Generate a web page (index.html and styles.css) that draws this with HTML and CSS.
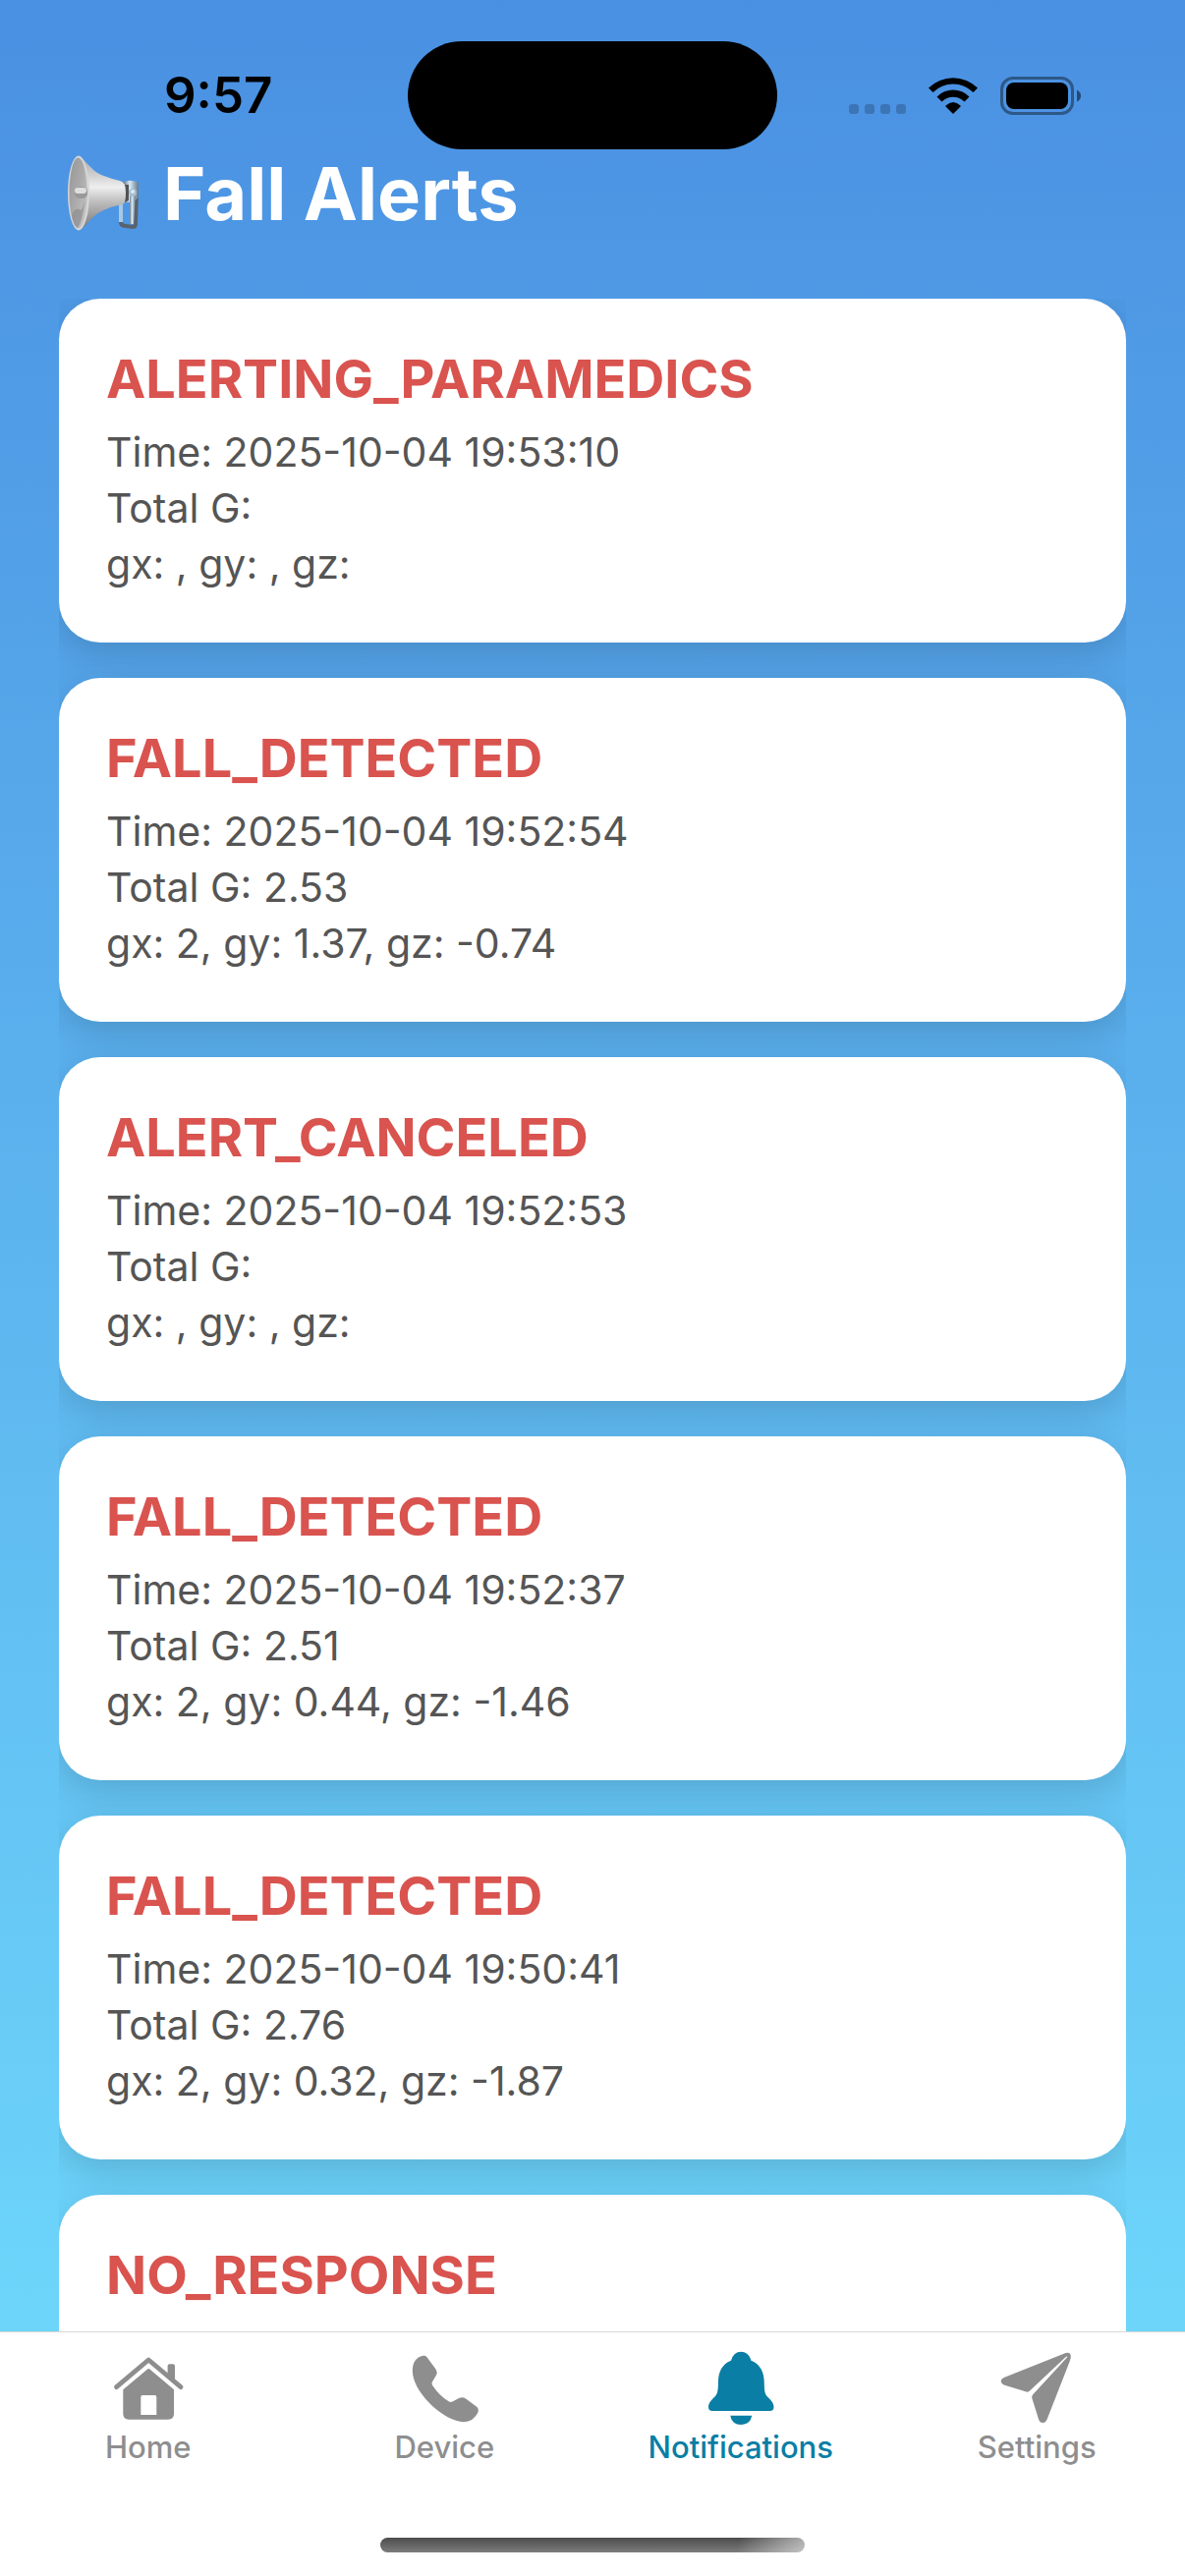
FILE: index.html
```html
<!DOCTYPE html>
<html lang="en">
<head>
<meta charset="utf-8">
<meta name="viewport" content="width=device-width, initial-scale=1">
<title>Fall Alerts</title>
<link rel="stylesheet" href="styles.css">
</head>
<body>
<div class="app">
  <div class="screen">
    <div class="status-bar">
      <div class="status-time">9:57</div>
      <div class="island"></div>
      <div class="status-icons">
        <svg class="cellular" viewBox="0 0 58 10" aria-hidden="true"><rect width="10" height="10" rx="3"/><rect x="16" width="10" height="10" rx="3"/><rect x="32" width="10" height="10" rx="3"/><rect x="48" width="10" height="10" rx="3"/></svg>
        <svg class="wifi" viewBox="0 0 52 38" aria-hidden="true"><path d="M1 11.500 5.500 16A29 29 0 0 1 46.500 16L51 11.500A35.500 35.500 0 0 0 1 11.500Z"/><path d="M9.500 20.500 14.500 25.500A16.300 16.300 0 0 1 37.500 25.500L42.500 20.500A23 23 0 0 0 9.500 20.500Z"/><path d="M18.500 29.500Q26 22.500 33.500 29.500Q33.800 30 33.500 30.500L26.500 37.500Q26 37.900 25.500 37.500L18.500 30.500Q18.200 30 18.500 29.500Z"/></svg>
        <svg class="battery" viewBox="0 0 82 39" aria-hidden="true"><rect x="1.500" y="1.500" width="72" height="36" rx="11.500" fill="none" stroke="#000" stroke-opacity=".4" stroke-width="3"/><rect x="6" y="6" width="63" height="27" rx="8"/><path d="M78 13.500Q82 15.500 82 19.500T78 25.500Z" fill-opacity=".5"/></svg>
      </div>
    </div>
    <h1 class="page-title">
      <svg class="megaphone" viewBox="0 0 76 78" aria-hidden="true">
        <defs>
          <linearGradient id="horn" x1="0" y1="0" x2="0" y2="1"><stop offset="0" stop-color="#a9a9a9"/><stop offset=".25" stop-color="#cfcfcf"/><stop offset=".42" stop-color="#eeeeee"/><stop offset=".62" stop-color="#bdbdbd"/><stop offset="1" stop-color="#777777"/></linearGradient>
          <linearGradient id="bell" x1="0" y1="0" x2="1" y2="1"><stop offset="0" stop-color="#969696"/><stop offset=".45" stop-color="#a9a8a8"/><stop offset="1" stop-color="#c9c9c9"/></linearGradient>
          <linearGradient id="steel"><stop offset="0" stop-color="#6d7e8d"/><stop offset=".4" stop-color="#d7eaf7"/><stop offset="1" stop-color="#66798a"/></linearGradient>
        </defs>
        <path d="M55 50V69Q56 72 60 72L67 73Q70 73 70 70L71 37" fill="none" stroke="#59636d" stroke-width="4"/>
        <path d="M55 50V68" stroke="#a9c8e2" stroke-width="4"/>
        <path d="M58 27Q66 24 73 28V43Q67 49 58 48Z" fill="url(#steel)"/>
        <path d="M59 30V48L63 46V30Z" fill="#505356"/>
        <path d="M12 1C21 6 24 15 35 20Q45 24 54 26Q60 27 60 38T57 50C47 52 36 55 28 62C21 68 18 75 11 76Z" fill="url(#horn)"/>
        <ellipse cx="12" cy="38.500" rx="11" ry="38" fill="#d5d5d5"/>
        <ellipse cx="11.500" cy="38.500" rx="9" ry="36" fill="url(#bell)"/>
        <path d="M5 61Q8 52 15 56L18 47Q16 67 11 74Q7 72 5 61Z" fill="#85858b" opacity=".6"/>
        <rect x="8" y="32" width="13" height="12" rx="5" fill="#999"/>
        <rect x="8" y="33" width="12" height="6" rx="3" fill="#dedede"/>
        <path d="M64 39V70H68L70 39Z" fill="url(#steel)"/>
        <circle cx="67" cy="38" r="4" fill="#a6bfd1"/><circle cx="67" cy="37" r="2" fill="#dceaf4"/>
      </svg>
      <span>Fall Alerts</span>
    </h1>
    <main class="alert-list">
      <article class="card"><h2>ALERTING_PARAMEDICS</h2><p>Time: 2025-10-04 19:53:10</p><p>Total G: </p><p>gx: , gy: , gz: </p></article>
      <article class="card"><h2>FALL_DETECTED</h2><p>Time: 2025-10-04 19:52:54</p><p>Total G: 2.53</p><p>gx: 2, gy: 1.37, gz: -0.74</p></article>
      <article class="card"><h2>ALERT_CANCELED</h2><p>Time: 2025-10-04 19:52:53</p><p>Total G: </p><p>gx: , gy: , gz: </p></article>
      <article class="card"><h2>FALL_DETECTED</h2><p>Time: 2025-10-04 19:52:37</p><p>Total G: 2.51</p><p>gx: 2, gy: 0.44, gz: -1.46</p></article>
      <article class="card"><h2>FALL_DETECTED</h2><p>Time: 2025-10-04 19:50:41</p><p>Total G: 2.76</p><p>gx: 2, gy: 0.32, gz: -1.87</p></article>
      <article class="card"><h2>NO_RESPONSE</h2></article>
    </main>
  </div>
  <nav class="tab-bar">
    <div class="tabs">
      <a class="tab" href="#home"><svg viewBox="0 0 84 84" aria-hidden="true"><path d="M9.500 40.700 42.200 13 75 40.700" fill="none" stroke="currentColor" stroke-width="4.800" stroke-linecap="round" stroke-linejoin="round"/><path d="M61.600 31V19.300Q61.600 17.300 63.600 17.300H67Q69 17.300 69 19.300V37Z"/><path fill-rule="evenodd" d="M40.500 23Q42.200 21.200 44 23L68 43.300V68Q68 73.700 62 73.700H22.300Q16.300 73.700 16.300 68V43.300ZM36 49Q34.300 49 34.300 51V69H50.300V51Q50.300 49 48.600 49Z"/></svg><span>Home</span></a>
      <a class="tab" href="#device"><svg viewBox="0 0 84 84" aria-hidden="true"><path d="M20.500 8.800Q23 8.300 24.300 10L33.500 22.500Q35.500 25.500 34 28.500L29.900 35.500Q29 37 30 38.700Q37 49.500 47 55.600Q48.700 56.500 50.500 55.600L57.500 51.800Q61 50.300 64 52.500L75.500 61Q77.600 63 76.700 66Q71 78 58 75.800C38 72 9.800 45 9.800 24Q10 11 20.500 8.800Z"/></svg><span>Device</span></a>
      <a class="tab active" href="#notifications"><svg viewBox="0 0 84 84" aria-hidden="true"><path d="M42.200 4.700Q50 4.700 52.400 13.700C62 17.500 65.500 25.500 65.700 35C65.900 43 65.800 47 69 50.500C72.500 54 75.500 57 75.500 61Q75.500 65 71.500 65H13Q9 65 9 61C9 57 12 54 15.500 50.500C18.700 47 18.800 43 19 35C19.200 25.500 22.500 17.500 32 13.700Q34.500 4.700 42.200 4.700ZM31.200 69.800H53.200Q51.500 79 42.200 79T31.200 69.800Z"/></svg><span>Notifications</span></a>
      <a class="tab" href="#settings"><svg viewBox="0 0 84 84" aria-hidden="true"><path d="M71.500 6Q77.500 4.500 76.700 11L75.500 15 53 72.500Q51.500 77 48.200 77Q45 77 43.800 72.700L37.300 52Q36.800 50 38 48.500L73 10.500Q73.300 9.300 72 9.700L35 44.500Q33.500 46 31.500 45.500L9.500 38.700Q5.700 37.500 5.700 34.300Q6 32 9.400 30.700Z"/></svg><span>Settings</span></a>
    </div>
    <div class="home-indicator"></div>
  </nav>
</div>
</body>
</html>
```
FILE: styles.css
```css
* { box-sizing: border-box; }

body {
  margin: 0;
  font-family: Inter, "Liberation Sans", sans-serif;
}

h1, h2, p { margin: 0; }

.app {
  display: flex;
  flex-direction: column;
  height: 100vh;
  background: #fff;
}

.screen {
  flex: 1;
  min-height: 0;
  display: flex;
  flex-direction: column;
  padding: 0 60px;
  background: linear-gradient(#4a90e2, #6dd5fa);
}

.status-bar {
  flex: none;
  display: grid;
  grid-template-columns: 1fr 376px 1fr;
  align-items: center;
  height: 152px;
  padding-top: 42px;
}

.status-time {
  padding-left: 107px;
  font-size: 51px;
  font-weight: 600;
  line-height: 62px;
}

.island {
  height: 110px;
  border-radius: 55px;
  background: #000;
}

.status-icons {
  display: flex;
  align-items: center;
  justify-content: flex-end;
  gap: 22px;
  padding-right: 46px;
}

.cellular { width: 58px; height: 10px; margin-top: 28px; fill-opacity: .2; }
.wifi { width: 52px; height: 38px; }
.battery { width: 82px; height: 39px; }

.page-title {
  flex: none;
  display: flex;
  align-items: center;
  gap: 22px;
  height: 90px;
  padding-left: 8px;
  color: #fff;
  font-size: 74px;
  font-weight: 700;
  line-height: 90px;
}

.megaphone { width: 76px; height: 78px; }

.alert-list {
  flex: 1;
  min-height: 0;
  margin-top: 62px;
  overflow: hidden;
}

.card {
  min-height: 350px;
  margin-bottom: 36px;
  padding: 48px;
  border-radius: 42px;
  background: #fff;
  box-shadow: 0 12px 36px rgba(0, 0, 0, .15);
}

.card h2 {
  margin-bottom: 16px;
  color: #d9534f;
  font-size: 54px;
  font-weight: 700;
  line-height: 67px;
}

.card p {
  margin-bottom: 6px;
  color: #555;
  font-size: 41px;
  line-height: 51px;
}

.tab-bar {
  flex: none;
  padding: 15px 0 24px;
  border-top: 1px solid #d8d8d8;
}

.tabs { display: flex; }

.tab {
  flex: 1;
  display: flex;
  flex-direction: column;
  align-items: center;
  color: #8e8e8f;
  font-size: 31px;
  font-weight: 500;
  line-height: 36px;
  text-decoration: none;
}

.tab.active { color: #0a7ea4; }

.tab svg {
  width: 84px;
  height: 84px;
  fill: currentColor;
}

.home-indicator {
  width: 432px;
  height: 15px;
  margin: 74px auto 0;
  border-radius: 8px;
  background:
    linear-gradient(100deg, transparent 84%, rgba(255, 255, 255, .55)),
    linear-gradient(#4c4c4c, #7c7c7c);
}
```
